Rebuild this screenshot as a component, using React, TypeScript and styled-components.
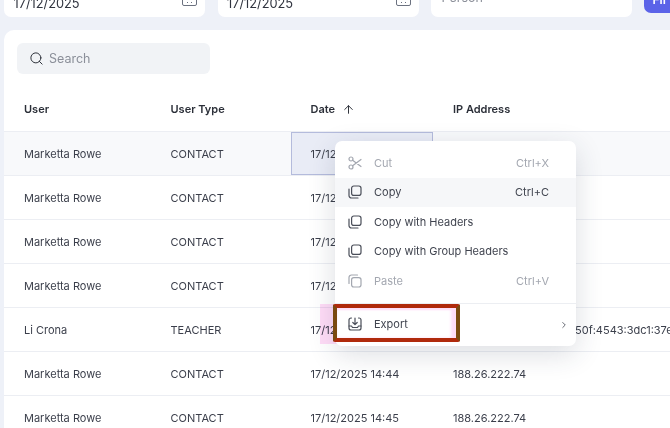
import React from "react";
import styled, { createGlobalStyle } from "styled-components";
import { Search, ArrowUp, ChevronRight } from "lucide-react";

const Global = createGlobalStyle`
  html, body { margin: 0; padding: 0; background: #eef1f8; }
  body { width: 670px; height: 428px; overflow: hidden; font-family: Inter, "Liberation Sans", sans-serif; }
`;

const Page = styled.div`
  position: relative;
  width: 670px;
  height: 428px;
  overflow: hidden;
  padding-left: 4px;
  box-sizing: border-box;
`;

const Filters = styled.div`
  display: flex;
  gap: 12.5px;
  height: 44px;
  margin-top: -27px;
  margin-bottom: 13px;
`;

const Field = styled.div<{ $w: number }>`
  width: ${(p) => p.$w}px;
  flex: none;
  background: #fff;
  border-radius: 7px;
  box-sizing: border-box;
  padding: 0 7px 5px 9.5px;
  display: flex;
  align-items: flex-end;
  justify-content: space-between;
  font-size: 12.8px;
  color: #30343f;
`;

const Placeholder = styled.span`
  color: #8b8f99;
  font-size: 12.5px;
  padding-bottom: 7px;
  padding-left: 1px;
`;

const DateText = styled.span`
  line-height: 16px;
`;

const Cal = styled.svg`
  width: 15px;
  height: 16px;
  margin-right: 1px;
  margin-bottom: 6px;
  color: #6c7280;
  position: relative;
  top: 1px;
`;

const FilterButton = styled.div`
  width: 60px;
  height: 40px;
  flex: none;
  background: #5b63e8;
  border-radius: 7px;
  color: #fff;
  font-size: 12px;
  font-weight: 600;
  box-sizing: border-box;
  padding: 19px 0 0 9px;
  margin-left: -1px;
`;

const Card = styled.div`
  background: #fff;
  border-radius: 10px 0 0 0;
  height: 398px;
  overflow: hidden;
  padding-top: 13px;
  box-sizing: border-box;
`;

const SearchBox = styled.div`
  width: 193px;
  height: 31px;
  margin-left: 13px;
  background: #f1f3f6;
  border-radius: 6px;
  display: flex;
  align-items: center;
  gap: 5px;
  padding-left: 12px;
  box-sizing: border-box;
  font-size: 12.5px;
  color: #8b8f99;
  svg { color: #2e323b; }
`;

const Table = styled.div`
  margin-top: 13px;
`;

const Row = styled.div<{ $head?: boolean; $shade?: boolean }>`
  display: grid;
  grid-template-columns: 146.5px 140px 142.5px 1fr;
  height: ${(p) => (p.$head ? 45 : 44)}px;
  border-bottom: 1px solid #eceef3;
  box-sizing: border-box;
  align-items: stretch;
  background: ${(p) => (p.$shade ? "#f8f9fb" : "#fff")};
  font-size: 11px;
  color: ${(p) => (p.$head ? "#2b2f38" : "#3b3f4b")};
  font-weight: ${(p) => (p.$head ? 600 : 400)};
`;

const Cell = styled.div<{ $selected?: boolean }>`
  display: flex;
  align-items: center;
  gap: 7px;
  padding-left: 20px;
  white-space: nowrap;
  overflow: visible;
  box-sizing: border-box;
  ${(p) => (p.$selected ? "background:#e9ecf6;box-shadow: inset 0 0 0 1px #b4bbdc;" : "")}
`;

const IpOverflow = styled.span`
  margin-left: 122px;
`;

const Menu = styled.div`
  position: absolute;
  left: 335px;
  top: 141px;
  width: 241px;
  height: 205px;
  background: #fff;
  border-radius: 7px;
  box-shadow: 0 8px 28px rgba(40, 48, 72, 0.16);
  padding-top: 7px;
  box-sizing: border-box;
`;

const Item = styled.div<{ $off?: boolean; $hover?: boolean; $low?: boolean }>`
  height: 29.5px;
  display: flex;
  align-items: center;
  padding: 0 27px 0 13px;
  font-size: 11px;
  color: ${(p) => (p.$off ? "#a3a7b0" : "#40444f")};
  background: ${(p) => (p.$hover ? "#f6f7f9" : "transparent")};
  ${(p) => (p.$low ? "padding-top:2px;box-sizing:border-box;" : "")}
  svg { flex: none; color: ${(p) => (p.$off ? "#a3a7b0" : "#4a4e59")}; }
`;

const Label = styled.span`
  margin-left: 12px;
  flex: 1;
`;

const Sep = styled.div`
  height: 1px;
  background: #eceef2;
  margin: 7px 0 5.5px;
`;

const Arrow = styled.span`
  position: relative;
  left: 20px;
  display: flex;
  color: #5a5e69;
`;

const Glow = styled.div`
  position: absolute;
  left: 320px;
  top: 304px;
  width: 144px;
  height: 40px;
  background: #ffdcf7;
  mix-blend-mode: multiply;
  pointer-events: none;
`;

const Callout = styled.div`
  position: absolute;
  left: 333px;
  top: 304px;
  width: 127px;
  height: 38px;
  box-sizing: border-box;
  border: 4px solid #b02a0c;
  border-left-color: #7a4a10;
  border-right-color: #7a4a10;
  border-radius: 2px;
  pointer-events: none;
`;

const InnerGlow = styled.div`
  position: absolute;
  left: 337px;
  top: 308px;
  width: 119px;
  height: 30px;
  background: #fff;
  box-shadow: inset -5px 0 3px #ffdcf7, inset 0 2px 2px #ffdcf7;
`;

const ExportRow = styled.div`
  position: absolute;
  left: 348px;
  top: 317px;
  display: flex;
  align-items: center;
  gap: 12px;
  font-size: 11px;
  color: #40444f;
  svg { color: #4a4e59; }
`;

const CopyIcon = () => (
  <svg width="14" height="14" viewBox="0 0 14 14" fill="none" stroke="currentColor" strokeWidth="1.2" strokeLinecap="round">
    <rect x="3.600" y="1" width="9.400" height="9.400" rx="2.200" />
    <path d="M1 4v6.500A2.500 2.500 0 0 0 3.500 13H10" />
  </svg>
);

const PasteIcon = () => (
  <svg width="14" height="14" viewBox="0 0 14 14" fill="none" stroke="currentColor" strokeWidth="1.2" strokeLinecap="round">
    <rect x="3.600" y="3.600" width="9.400" height="9.400" rx="2.200" />
    <path d="M1 9.500V3.500A2.500 2.500 0 0 1 3.500 1H9.500" />
  </svg>
);

const CutIcon = () => (
  <svg width="14" height="14" viewBox="0 0 14 14" fill="none" stroke="currentColor" strokeWidth="1.2" strokeLinecap="round">
    <circle cx="3" cy="3" r="2" />
    <circle cx="3" cy="11" r="2" />
    <path d="M4.600 4.200 13 10.500M4.600 9.800 13 3.500" />
  </svg>
);

const CalIcon = () => (
  <Cal viewBox="0 0 15 16" fill="none" stroke="currentColor" strokeWidth="1">
    <rect x="0.500" y="2.500" width="14" height="12" rx="1.500" />
    <path d="M0.500 6h14M4 1v3M11 1v3M5 11.500h1M9 11.500h1" />
  </Cal>
);

const ExportIcon = () => (
  <svg width="14" height="14" viewBox="0 0 14 14" fill="none" stroke="currentColor" strokeWidth="1.2" strokeLinecap="round" strokeLinejoin="round">
    <path d="M3.500 1H3A2 2 0 0 0 1 3v8a2 2 0 0 0 2 2h8a2 2 0 0 0 2-2V3a2 2 0 0 0-2-2h-.5" />
    <path d="M7 1v6.500M4.800 5.500 7 7.700l2.200-2.200M1 9h2.500l1 1.500h5l1-1.500H13" />
  </svg>
);

const rows = [
  ["Marketta Rowe", "CONTACT", "17/12", ""],
  ["Marketta Rowe", "CONTACT", "17/12", ""],
  ["Marketta Rowe", "CONTACT", "17/12", ""],
  ["Marketta Rowe", "CONTACT", "17/12", ""],
  ["Li Crona", "TEACHER", "17/12", "50f:4543:3dc1:37e"],
  ["Marketta Rowe", "CONTACT", "17/12/2025 14:44", "188.26.222.74"],
  ["Marketta Rowe", "CONTACT", "17/12/2025 14:45", "188.26.222.74"],
];

export default function App() {
  return (
    <Page>
      <Global />
      <Filters>
        <Field $w={201}><DateText>17/12/2025</DateText><CalIcon /></Field>
        <Field $w={201}><DateText>17/12/2025</DateText><CalIcon /></Field>
        <Field $w={201}><Placeholder>Person</Placeholder></Field>
        <FilterButton>Fil</FilterButton>
      </Filters>
      <Card>
        <SearchBox><Search size={15} strokeWidth={1.6} />Search</SearchBox>
        <Table>
          <Row $head>
            <Cell>User</Cell>
            <Cell>User Type</Cell>
            <Cell>Date<ArrowUp size={13} strokeWidth={1.8} /></Cell>
            <Cell>IP Address</Cell>
          </Row>
          {rows.map((r, i) => (
            <Row key={i} $shade={i === 0}>
              <Cell>{r[0]}</Cell>
              <Cell>{r[1]}</Cell>
              <Cell $selected={i === 0}>{r[2]}</Cell>
              <Cell>{i === 4 ? <IpOverflow>{r[3]}</IpOverflow> : r[3]}</Cell>
            </Row>
          ))}
        </Table>
      </Card>
      <Glow />
      <Menu>
        <Item $off><CutIcon /><Label>Cut</Label>Ctrl+X</Item>
        <Item $hover><CopyIcon /><Label>Copy</Label>Ctrl+C</Item>
        <Item><CopyIcon /><Label>Copy with Headers</Label></Item>
        <Item><CopyIcon /><Label>Copy with Group Headers</Label></Item>
        <Item $off><PasteIcon /><Label>Paste</Label>Ctrl+V</Item>
        <Sep />
        <Item $low><Label /><Arrow><ChevronRight size={10} strokeWidth={2} /></Arrow></Item>
      </Menu>
      <InnerGlow />
      <ExportRow><ExportIcon />Export</ExportRow>
      <Callout />
    </Page>
  );
}
